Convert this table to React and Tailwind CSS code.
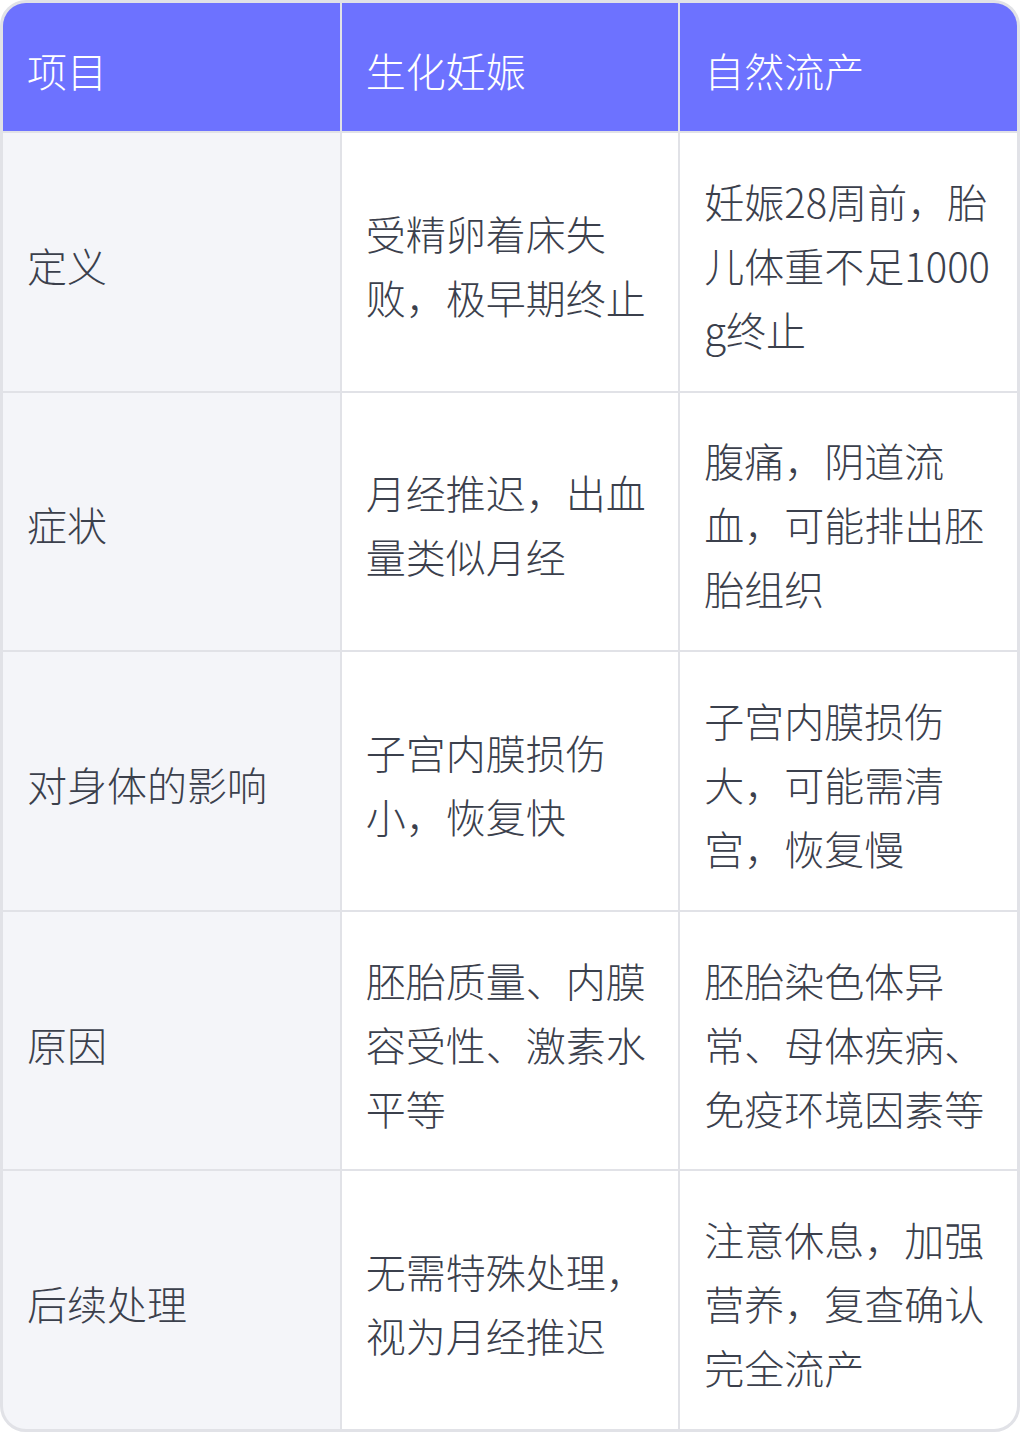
const header = ['项目', '生化妊娠', '自然流产']

const rows = [
  ['定义', '受精卵着床失败，极早期终止', '妊娠28周前，胎儿体重不足1000g终止'],
  ['症状', '月经推迟，出血量类似月经', '腹痛，阴道流血，可能排出胚胎组织'],
  ['对身体的影响', '子宫内膜损伤小，恢复快', '子宫内膜损伤大，可能需清宫，恢复慢'],
  ['原因', '胚胎质量、内膜容受性、激素水平等', '胚胎染色体异常、母体疾病、免疫环境因素等'],
  ['后续处理', '无需特殊处理，视为月经推迟', '注意休息，加强营养，复查确认完全流产'],
]

export default function App() {
  return (
    <div
      className="w-[1020px] h-[1432px] bg-white"
      style={{ fontFamily: '"Noto Sans CJK SC", "Noto Sans", sans-serif' }}
    >
      <div className="h-full rounded-[26px] border-[3px] border-[#e1e2e7] overflow-hidden bg-[#e1e2e7]">
        <div className="grid h-full grid-cols-3 grid-rows-[128px_repeat(5,1fr)] gap-[2px]">
          {header.map((h) => (
            <div key={h} className="bg-[#6d72ff] flex items-center px-6 pt-[6px] text-[40px] text-white font-light">
              {h}
            </div>
          ))}
          {rows.map((r) =>
            r.map((c, i) => (
              <div
                key={r[0] + i}
                className={
                  'flex items-center px-6 pt-[6px] text-[40px] leading-[64px] text-[#3b404c] font-light break-all ' +
                  (i === 0 ? 'bg-[#f4f5f9]' : 'bg-white')
                }
              >
                <p>{c}</p>
              </div>
            ))
          )}
        </div>
      </div>
    </div>
  )
}
